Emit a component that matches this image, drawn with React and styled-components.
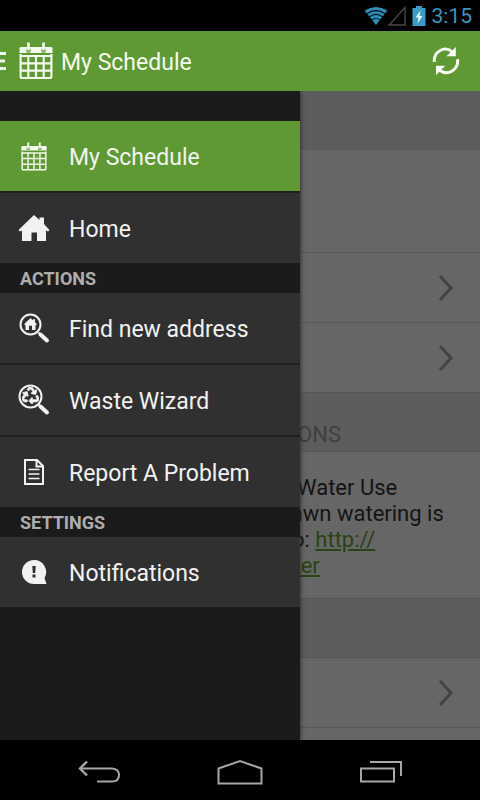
import styled, { createGlobalStyle } from "styled-components"
import { FaRecycle } from "react-icons/fa"

const GREEN = "#5f9933"

const menu = [
  {
    items: [
      { label: "My Schedule", icon: CalendarIcon, active: true },
      { label: "Home", icon: HomeIcon },
    ],
  },
  {
    title: "ACTIONS",
    items: [
      { label: "Find new address", icon: FindIcon },
      { label: "Waste Wizard", icon: WasteIcon },
      { label: "Report A Problem", icon: ReportIcon },
    ],
  },
  {
    title: "SETTINGS",
    items: [{ label: "Notifications", icon: NoticeIcon }],
  },
]

export default function App() {
  return (
    <Page>
      <GlobalStyle />
      <StatusBar>
        <Signals>
          <WifiIcon />
          <SignalIcon />
        </Signals>
        <BatteryIcon />
        <Clock>3:15</Clock>
      </StatusBar>

      <AppBar>
        <TitleButton aria-label="Close menu">
          <MenuIcon />
          <CalendarIcon size={36} bold />
        </TitleButton>
        <Title>My Schedule</Title>
        <RefreshButton aria-label="Refresh">
          <RefreshIcon />
        </RefreshButton>
      </AppBar>

      <Body>
        <Content>
          <SectionHead />
          <Row $height={103} />
          <LinkRow />
          <LinkRow />
          <SectionHead>RESTRICTIONS</SectionHead>
          <Message>
            <Line $indent={297}>Water Use</Line>
            <Line $indent={279}>Lawn watering is</Line>
            <Line $indent={285}>to: <a href="#water">http://</a></Line>
            <Line $indent={265}><a href="#water">water</a></Line>
          </Message>
          <SectionHead />
          <LinkRow />
          <LinkRow />
        </Content>

        <Drawer>
          {menu.map((group, index) => (
            <section key={index}>
              {group.title && <GroupTitle>{group.title}</GroupTitle>}
              <ItemList>
                {group.items.map(({ label, icon: Icon, active }) => (
                  <li key={label}>
                    <Item $active={active}>
                      <IconBox><Icon /></IconBox>
                      <Label>{label}</Label>
                    </Item>
                  </li>
                ))}
              </ItemList>
            </section>
          ))}
        </Drawer>
      </Body>

      <NavBar>
        <NavButton aria-label="Back"><BackIcon /></NavButton>
        <NavButton aria-label="Home screen"><HomeKeyIcon /></NavButton>
        <NavButton aria-label="Recent apps"><RecentIcon /></NavButton>
      </NavBar>
    </Page>
  )
}

function LinkRow() {
  return (
    <Row $height={70}>
      <RowButton aria-label="Open">
        <svg width="16" height="28" viewBox="0 0 16 28" fill="none" stroke="#434343" strokeWidth="3">
          <path d="M2 2 L13 14 L2 26" />
        </svg>
      </RowButton>
    </Row>
  )
}

function WifiIcon() {
  return (
    <svg width="24" height="20" viewBox="0 0 26 22">
      <path d="M0.500 5 Q13 -3 25.500 5 L13 21 Z" fill="#2f8fb8" />
      <path d="M3 8.500 Q13 1.500 23 8.500 M5.500 12 Q13 6.500 20.500 12 M8.500 15.500 Q13 12 17.500 15.500" fill="none" stroke="#04141c" strokeWidth="1.300" />
    </svg>
  )
}

function SignalIcon() {
  return (
    <svg width="18" height="20" viewBox="0 0 18 20">
      <path d="M1 19 L17 19 L17 1.500 Z" fill="none" stroke="#4a4a4a" strokeWidth="1.300" />
    </svg>
  )
}

function BatteryIcon() {
  return (
    <svg width="14" height="22" viewBox="0 0 14 22">
      <path d="M4 1 H10 V3 H13.500 V21 H0.500 V3 H4 Z" fill="#3a9cc6" />
      <path d="M8.500 5.500 L3.500 12.500 H6.500 L5.500 18.500 L10.500 11 H7.500 Z" fill="#e6f7ff" />
    </svg>
  )
}

function MenuIcon() {
  return (
    <svg width="6" height="20" viewBox="0 0 6 20" fill="#f4f9ee">
      <path d="M0 1 H6 V4 H0 Z M0 8.500 H5 V11.500 H0 Z M0 16 H6 V19 H0 Z" />
    </svg>
  )
}

function CalendarIcon({ size = 30, bold }) {
  return (
    <svg width={size} height={size + 2} viewBox={bold ? "0 0 36 38" : "-1.500 -2.500 39 41"}>
      <g fill="none" stroke="#f4f9ee" strokeWidth={bold ? 2.2 : 1.9}>
        <path d="M2.600 12 V34.500 Q2.600 36 4 36 H32 Q33.400 36 33.400 34.500 V12" />
        <path d="M2 14 H34 M3 21.300 H33 M3 28.600 H33 M10.300 14 V36 M18 14 V36 M25.700 14 V36" />
      </g>
      <path d="M1.500 6.500 Q1.500 5 3 5 H33 Q34.500 5 34.500 6.500 V11 H1.500 Z" fill="#f4f9ee" />
      <g fill="#8fb873">
        <circle cx="10.500" cy="8.500" r="2.500" />
        <circle cx="25.500" cy="8.500" r="2.500" />
      </g>
      <path d="M10.500 0.500 V8 M25.500 0.500 V8" stroke="#f4f9ee" strokeWidth="2.600" />
    </svg>
  )
}

function RefreshIcon() {
  return (
    <svg width="28" height="30" viewBox="0 0 30 32">
      <g fill="none" stroke="#fbfdf5" strokeWidth="3.200">
        <path d="M2.500 17 C1.500 6 13 -0.500 21.500 6" />
        <path d="M27.500 14 C28.500 25.500 17 32.500 8 26" />
      </g>
      <path d="M25.500 1 V11 H15.500 Z M4.300 31 V21 H14.300 Z" fill="#fbfdf5" />
    </svg>
  )
}

function HomeIcon() {
  return (
    <svg width="32" height="28" viewBox="0 0 32 28" fill="#f2f2f2">
      <path d="M16 1 L21.500 6 V3.500 H26 V10 L31.500 16 L30 17.500 L28 16.500 V27 H19 V18.500 H13.500 V27 H4 V16.500 L2 17.500 L0.500 16 Z" />
    </svg>
  )
}

function Magnifier({ radius, children }) {
  return (
    <svg width="32" height="32" viewBox="0 0 32 32">
      <circle cx="12.500" cy="12.500" r={radius} fill="none" stroke="#f2f2f2" strokeWidth="2" />
      <path d="M22.500 22.500 L29 28.500" stroke="#f2f2f2" strokeWidth="4" strokeLinecap="round" />
      <path d="M20.500 20.500 L23 23" stroke="#f2f2f2" strokeWidth="2" />
      {children}
    </svg>
  )
}

function FindIcon() {
  return (
    <Magnifier radius={10}>
      <path d="M12.500 6 L15 8.300 V7.300 H17 V10.200 L19 12.300 L17.500 13.200 V18 H14 V13.800 H11 V18 H7.500 V13.200 L6 12.300 Z" fill="#f2f2f2" />
    </Magnifier>
  )
}

function WasteIcon() {
  return (
    <Magnifier radius={11}>
      <FaRecycle x="4" y="3" size={17} color="#f2f2f2" stroke="#f2f2f2" strokeWidth="24" />
    </Magnifier>
  )
}

function ReportIcon() {
  return (
    <svg width="22" height="28" viewBox="0 0 22 28" fill="none" stroke="#f2f2f2" strokeWidth="2">
      <path d="M2 2 H14 L20 8 V26 H2 Z" />
      <path d="M13.500 2 V8.500 H20" />
      <path d="M5.500 11.500 H16.500 M5.500 16 H16.500 M5.500 20.500 H16.500" strokeWidth="1.600" />
    </svg>
  )
}

function NoticeIcon() {
  return (
    <svg width="26" height="26" viewBox="0 0 26 26">
      <path d="M13 1 A12 12 0 1 0 13 25 H25.500 L23.500 19 A12 12 0 0 0 13 1 Z" fill="#f2f2f2" />
      <path d="M11.300 7 H14.700 L14.200 14 H11.800 Z M11.500 15.500 H14.500 V18.500 H11.500 Z" fill="#303030" />
    </svg>
  )
}

function BackIcon() {
  return (
    <svg width="44" height="24" viewBox="0 0 44 24" fill="none" stroke="#a6a6a6" strokeWidth="2">
      <path d="M4 8.500 H35 Q42 9 42 15 Q42 21.500 35 21.500 H20" />
      <path d="M10 1.500 L3 8.500 L10 15.500" strokeWidth="2.400" />
    </svg>
  )
}

function HomeKeyIcon() {
  return (
    <svg width="46" height="26" viewBox="0 0 46 26" fill="none" stroke="#a6a6a6" strokeWidth="2">
      <path d="M1.500 24.500 V9.500 L23 2 L44.500 9.500 V24.500 Z" />
    </svg>
  )
}

function RecentIcon() {
  return (
    <svg width="44" height="24" viewBox="0 0 44 24" fill="none" stroke="#a6a6a6" strokeWidth="2">
      <path d="M2 8.500 H35 V21.500 H2 Z" />
      <path d="M11 2 H42 V16" />
    </svg>
  )
}

const GlobalStyle = createGlobalStyle`
  * {
    box-sizing: border-box;
  }

  body {
    margin: 0;
    background: #000;
    font-family: Roboto, "Noto Sans", sans-serif;
  }

  button {
    border: 0;
    padding: 0;
    background: none;
    font: inherit;
    color: inherit;
    cursor: pointer;
  }

  svg {
    display: block;
    flex-shrink: 0;
  }
`

const Page = styled.div`
  display: flex;
  flex-direction: column;
  height: 100vh;
`

const StatusBar = styled.div`
  flex-shrink: 0;
  height: 31px;
  padding-right: 8px;
  display: flex;
  justify-content: flex-end;
  align-items: center;
  gap: 6px;
  background: #000;
`

const Signals = styled.div`
  display: flex;
`

const Clock = styled.time`
  font-size: 21px;
  line-height: 28px;
  color: #3597c2;
`

const AppBar = styled.header`
  flex-shrink: 0;
  height: 60px;
  padding-right: 20px;
  display: flex;
  align-items: center;
  background: ${GREEN};
  color: #f4f9ee;
`

const TitleButton = styled.button`
  display: flex;
  align-items: center;
  gap: 12px;
`

const Title = styled.h1`
  flex: 1;
  margin: 0 0 0 7px;
  padding-top: 3px;
  font-size: 23px;
  font-weight: 400;
  line-height: 28px;
`

const RefreshButton = styled.button`
  display: flex;
`

const Body = styled.div`
  flex: 1;
  min-height: 0;
  position: relative;
  overflow: hidden;
  background: #666;
`

const Content = styled.main`
  height: 100%;
  overflow: hidden;
`

const SectionHead = styled.h2`
  height: 59px;
  margin: 0;
  padding: 0 calc(100% - 341px) 3px 0;
  display: flex;
  justify-content: flex-end;
  align-items: flex-end;
  background: #5d5d5d;
  border-bottom: 1px solid #575757;
  font-size: 22px;
  font-weight: 400;
  line-height: 26px;
  color: #404040;
`

const Row = styled.div`
  height: ${(props) => props.$height}px;
  display: flex;
  justify-content: flex-end;
  align-items: center;
  padding-right: 26px;
  border-bottom: 1px solid #575757;
`

const RowButton = styled.button`
  display: flex;
`

const Message = styled.div`
  padding: 23px 0 19px;
  border-bottom: 1px solid #575757;
  font-size: 22px;
  line-height: 26px;
  color: #141414;

  a {
    color: #294312;
  }
`

const Line = styled.div`
  padding-left: ${(props) => props.$indent}px;
  white-space: nowrap;
`

const Drawer = styled.nav`
  position: absolute;
  top: 0;
  bottom: 0;
  left: 0;
  width: 300px;
  padding-top: 30px;
  background: #1b1b1b;
  box-shadow: 0 0 5px #222;
`

const GroupTitle = styled.h2`
  margin: 0;
  padding: 3px 20px 1px;
  font-size: 18px;
  font-weight: 700;
  line-height: 26px;
  color: #adadad;
`

const ItemList = styled.ul`
  margin: 0;
  padding: 0;
  list-style: none;

  li + li {
    border-top: 2px solid #202020;
  }
`

const Item = styled.button`
  width: 100%;
  height: 70px;
  padding: 0 19px;
  display: flex;
  align-items: center;
  gap: 20px;
  background: ${(props) => (props.$active ? GREEN : "#303030")};
  font-size: 23px;
  line-height: 28px;
  color: #f2f2f2;
`

const IconBox = styled.span`
  width: 30px;
  display: flex;
  justify-content: center;
`

const Label = styled.span`
  padding-top: 4px;
`

const NavBar = styled.footer`
  flex-shrink: 0;
  height: 60px;
  padding: 3px 29px 0;
  display: flex;
  background: #000;
`

const NavButton = styled.button`
  flex: 1;
  display: flex;
  justify-content: center;
  align-items: center;
`
